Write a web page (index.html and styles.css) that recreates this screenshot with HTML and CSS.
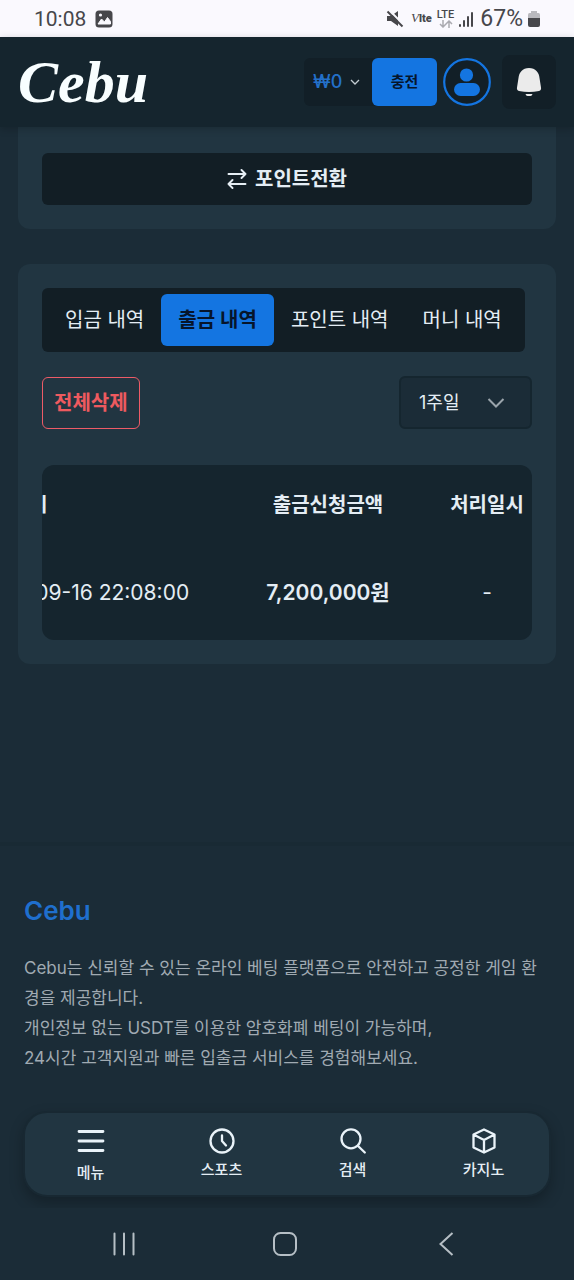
FILE: index.html
```html
<!DOCTYPE html>
<html lang="ko">
<head>
<meta charset="utf-8">
<meta name="viewport" content="width=device-width, initial-scale=1">
<title>Cebu</title>
<link rel="stylesheet" href="styles.css">
</head>
<body>
<div class="status">
  <span class="status-time">10:08</span>
  <svg class="status-photo" width="18" height="18" viewBox="0 0 18 18"><rect x="0.5" y="0.5" width="17" height="17" rx="3.5" fill="#47474b"/><path d="M3 14l3.500-5 3 3 3-4.500 3 4v2.500z" fill="#faf9fe" stroke="#faf9fe" stroke-linejoin="round"/><circle cx="5.500" cy="5" r="1.600" fill="#faf9fe"/></svg>
  <div class="status-right">
    <svg width="18" height="18" viewBox="0 0 18 18"><path d="M1 6h4l7-5v15l-7-5H1z" fill="#47474b"/><path d="M3 0l16 16" stroke="#faf9fe" stroke-width="2"/><path d="M1.500 1.500l15 15" stroke="#47474b" stroke-width="2"/></svg>
    <span class="volte"><i>V</i>lte</span>
    <span class="lte">LTE<svg width="14" height="8" viewBox="0 0 14 8" fill="none" stroke="#aaaab0" stroke-width="1.500"><path d="M4 0v7M1 4l3 3 3-3M10 8V1M7 4l3-3 3 3"/></svg></span>
    <svg width="16" height="18" viewBox="0 0 16 18" fill="#47474b"><rect x="0" y="14" width="2" height="3" rx="1"/><rect x="4" y="10" width="2" height="7" rx="1"/><rect x="8" y="6" width="2" height="11" rx="1"/><rect x="12" y="2" width="2" height="15" rx="1"/></svg>
    <span class="status-pct">67%</span>
    <svg width="12" height="18" viewBox="0 0 12 18"><path d="M3 1h6v2h1.500Q12 3 12 5v4H0V5q0-2 1.500-2H3z" fill="#b9b9be"/><path d="M0 8h12v7q0 2-2 2H2q-2 0-2-2z" fill="#47474b"/></svg>
  </div>
</div>

<header class="header">
  <a class="logo" href="#">Cebu</a>
  <div class="header-actions">
    <div class="wallet">
      <button class="balance" type="button">₩0 <svg width="10" height="10" viewBox="0 0 10 10" fill="none" stroke="#c3ccd2" stroke-width="1.300"><path d="M1 3l4 4 4-4"/></svg></button>
      <button class="charge" type="button">충전</button>
    </div>
    <button class="profile" type="button" aria-label="프로필"><svg width="48" height="48" viewBox="0 0 48 48"><circle cx="24" cy="24" r="22.800" fill="#121f27" stroke="#1475e1" stroke-width="2.200"/><circle cx="23.500" cy="17" r="6.600" fill="#1475e1"/><rect x="11" y="25" width="26" height="13" rx="6.500" fill="#1475e1"/></svg></button>
    <button class="bell" type="button" aria-label="알림"><svg width="26" height="30" viewBox="0 0 26 30" fill="#ebebeb"><path d="M13 1C6.500 1 3 5.500 2.500 11L1 20.500Q.500 23 3 24q10 2.200 20 0 2.500-1 2-3.500L23.500 11C23 5.500 19.500 1 13 1z"/><path d="M9.500 27h7q-.500 2-2 2h-3q-1.500 0-2-2z"/></svg></button>
  </div>
</header>

<main class="main">
  <section class="card card-top">
    <button class="convert" type="button"><svg width="20" height="20" viewBox="0 0 20 20" fill="none" stroke="#e6eef4" stroke-width="1.900" stroke-linecap="round" stroke-linejoin="round"><path d="M1.500 5h17M14.500 1l4 4-4 4M18.500 15h-17M5.500 11l-4 4 4 4"/></svg>포인트전환</button>
  </section>
  <section class="card">
    <nav class="tabs">
      <button class="tab" type="button">입금 내역</button>
      <button class="tab tab-active" type="button">출금 내역</button>
      <button class="tab" type="button">포인트 내역</button>
      <button class="tab" type="button">머니 내역</button>
    </nav>
    <div class="tools">
      <button class="delete" type="button">전체삭제</button>
      <div class="period">
        <select class="period-select" aria-label="기간"><option>1주일</option></select>
        <svg class="period-arrow" width="18" height="12" viewBox="0 0 18 12" fill="none" stroke="#9aa4ab" stroke-width="2"><path d="M1.500 2L9 9.500 16.500 2"/></svg>
      </div>
    </div>
    <div class="table-wrap">
      <table class="table">
        <thead><tr><th class="col-date">신청일시</th><th class="col-amount">출금신청금액</th><th class="col-done">처리일시</th></tr></thead>
        <tbody><tr><td class="col-date">2025-09-16 22:08:00</td><td class="col-amount amount">7,200,000원</td><td class="col-done">-</td></tr></tbody>
      </table>
    </div>
  </section>
</main>

<footer class="footer">
  <h2 class="footer-title">Cebu</h2>
  <p class="footer-text">Cebu는 신뢰할 수 있는 온라인 베팅 플랫폼으로 안전하고 공정한 게임 환경을 제공합니다.<br>개인정보 없는 USDT를 이용한 암호화폐 베팅이 가능하며,<br>24시간 고객지원과 빠른 입출금 서비스를 경험해보세요.</p>
</footer>

<nav class="dock">
  <a class="dock-item dock-menu" href="#"><svg width="28" height="24" viewBox="0 0 28 24" stroke="#eaf3f9" stroke-width="2.800" stroke-linecap="round"><path d="M2 2.500h24M2 12h24M2 21.500h24"/></svg>메뉴</a>
  <a class="dock-item" href="#"><svg width="28" height="28" viewBox="0 0 28 28" fill="none" stroke="#eaf3f9" stroke-width="2.300" stroke-linecap="round" stroke-linejoin="round"><circle cx="14" cy="14" r="11.500"/><path d="M14 8.500v5.500l4 4.500"/></svg>스포츠</a>
  <a class="dock-item" href="#"><svg width="28" height="28" viewBox="0 0 28 28" fill="none" stroke="#eaf3f9" stroke-width="2.300" stroke-linecap="round"><circle cx="12" cy="11.800" r="9.500"/><path d="M18.800 18.700l7 6.800"/></svg>검색</a>
  <a class="dock-item" href="#"><svg width="28" height="28" viewBox="0 0 28 28" fill="none" stroke="#eaf3f9" stroke-width="2.300" stroke-linejoin="round"><path d="M14 2.500l10.500 5v13L14 25.500l-10.500-5v-13zM3.500 7.500L14 13l10.500-5.500M14 13v12.500"/></svg>카지노</a>
</nav>

<div class="system">
  <button class="sys-btn" type="button" aria-label="최근 앱"><svg width="24" height="24" viewBox="0 0 24 24" stroke="#b6bfc5" stroke-width="2" stroke-linecap="round"><path d="M2.500 1.500v21M12 1.500v21M21.500 1.500v21"/></svg></button>
  <button class="sys-btn" type="button" aria-label="홈"><svg width="24" height="24" viewBox="0 0 24 24" fill="none" stroke="#b6bfc5" stroke-width="2"><rect x="1" y="1" width="22" height="22" rx="6.500"/></svg></button>
  <button class="sys-btn" type="button" aria-label="뒤로"><svg width="24" height="24" viewBox="0 0 24 24" fill="none" stroke="#b6bfc5" stroke-width="2"><path d="M18.500 1L6.500 12l12 11"/></svg></button>
</div>
</body>
</html>
```
FILE: styles.css
```css
* { box-sizing: border-box; }

body {
  margin: 0;
  min-height: 100vh;
  display: flex;
  flex-direction: column;
  background: #1b2c37;
  color: #e4edf4;
  font-family: Inter, "Noto Sans CJK KR", sans-serif;
  font-size: 20px;
  line-height: 24px;
}

button, select {
  margin: 0;
  padding: 0;
  border: 0;
  background: none;
  color: inherit;
  font: inherit;
}

button { cursor: pointer; }
a { color: inherit; text-decoration: none; }
svg { display: block; flex: none; }

.status {
  display: flex;
  align-items: center;
  gap: 9px;
  height: 37px;
  padding: 0 34px;
  background: #faf9fe;
  color: #47474b;
  font-family: Roboto, sans-serif;
  font-size: 21px;
}

.status-right {
  display: flex;
  align-items: center;
  gap: 5px;
  margin-left: auto;
}

.volte {
  padding-left: 2px;
  font-size: 11px;
  font-weight: 900;
}

.volte i {
  font-family: "Liberation Serif", serif;
  font-size: 13px;
  font-weight: 400;
}

.lte {
  display: flex;
  flex-direction: column;
  align-items: center;
  font-size: 11px;
  font-weight: 500;
  line-height: 11px;
}

.status-pct { font-size: 23px; }

.header {
  position: relative;
  z-index: 1;
  display: flex;
  align-items: center;
  justify-content: space-between;
  height: 90px;
  padding: 0 18px;
  background: #15252e;
  box-shadow: 0 2px 8px rgba(0, 0, 0, 0.2);
}

.logo {
  color: #f8feff;
  font-family: "Liberation Serif", serif;
  font-size: 60px;
  font-style: italic;
  font-weight: 700;
  line-height: 60px;
}

.header-actions, .wallet {
  display: flex;
  align-items: center;
}

.wallet {
  height: 48px;
  border-radius: 6px;
  background: #121f27;
}

.balance {
  display: flex;
  align-items: center;
  justify-content: space-between;
  width: 68px;
  padding: 0 12px 0 9px;
  color: #2370c9;
  font-size: 18px;
  font-weight: 500;
}

.charge {
  width: 65px;
  height: 48px;
  border-radius: 6px;
  background: #1475e1;
  color: #06152b;
  font-size: 15px;
  font-weight: 700;
}

.profile { margin: 0 11px 0 6px; }

.bell {
  display: grid;
  place-items: center;
  width: 54px;
  height: 54px;
  border-radius: 8px;
  background: #121f27;
}

.main {
  display: flex;
  flex-direction: column;
  gap: 35px;
  padding: 0 18px;
}

.card {
  padding: 24px;
  border-radius: 12px;
  background: #213541;
}

.card-top {
  padding-top: 26px;
  border-radius: 0 0 12px 12px;
}

.convert {
  display: flex;
  align-items: center;
  justify-content: center;
  gap: 8px;
  width: 100%;
  height: 52px;
  border-radius: 6px;
  background: #121e25;
  font-weight: 700;
}

.tabs {
  display: flex;
  width: fit-content;
  padding: 6px;
  border-radius: 6px;
  background: #121e25;
}

.tab {
  height: 52px;
  padding: 0 17px;
  border-radius: 6px;
  white-space: nowrap;
}

.tab-active {
  background: #1475e1;
  color: #06152b;
  font-weight: 600;
}

.tools {
  display: flex;
  align-items: center;
  justify-content: space-between;
  margin: 24px 0 36px;
}

.delete {
  height: 52px;
  padding: 0 11px;
  border: 1px solid #ed5b67;
  border-radius: 6px;
  color: #ee5a5f;
  font-weight: 700;
}

.period {
  display: grid;
  align-items: center;
  width: 133px;
}

.period-select, .period-arrow { grid-area: 1 / 1; }

.period-select {
  width: 100%;
  height: 53px;
  padding: 0 18px;
  border: 2px solid #15262f;
  border-radius: 6px;
  background: #1b2c37;
  font-size: 18px;
  appearance: none;
}

.period-arrow {
  justify-self: end;
  margin-right: 27px;
  pointer-events: none;
}

/* The row direction keeps the last column in view when the table is wider than the card. */
.table-wrap {
  direction: rtl;
  overflow-x: auto;
  border-radius: 12px;
  background: #15252e;
  scrollbar-width: none;
}

.table {
  direction: ltr;
  width: 100%;
  min-width: 566px;
  border-collapse: collapse;
  table-layout: fixed;
  text-align: center;
  white-space: nowrap;
}

.table th, .table td { padding: 0 8px; }
.table th { height: 80px; font-weight: 600; }
.table td { height: 95px; font-size: 21px; }
.table .col-date { text-align: left; }
.col-amount { width: 228px; }
.col-done { width: 90px; }
.table .amount { font-weight: 600; }

.footer {
  margin-top: 178px;
  padding: 49px 24px 37px;
  border-top: 4px solid #192a34;
}

.footer-title {
  margin: 0 0 26px;
  color: #1f6fce;
  font-size: 26px;
  font-weight: 600;
  line-height: 32px;
}

.footer-text {
  margin: 0;
  color: #a0aab2;
  font-size: 17px;
  line-height: 30px;
}

.dock {
  display: flex;
  margin: auto 23px 0;
  padding: 14px 0 10px;
  border: 2px solid #182832;
  border-radius: 24px;
  background: #213541;
  box-shadow: 0 6px 14px rgba(0, 0, 0, 0.25);
}

.dock-item {
  display: flex;
  flex: 1;
  flex-direction: column;
  align-items: center;
  gap: 3px;
  font-size: 15px;
  font-weight: 500;
  line-height: 24px;
}

.dock-menu { gap: 8px; padding-top: 2px; }

.system {
  display: flex;
  justify-content: center;
  gap: 137px;
  z-index: 1;
  margin-top: 11px;
  padding: 24px 4px 24px 0;
  background: #1b2c37;
}

.sys-btn { display: block; }
```
